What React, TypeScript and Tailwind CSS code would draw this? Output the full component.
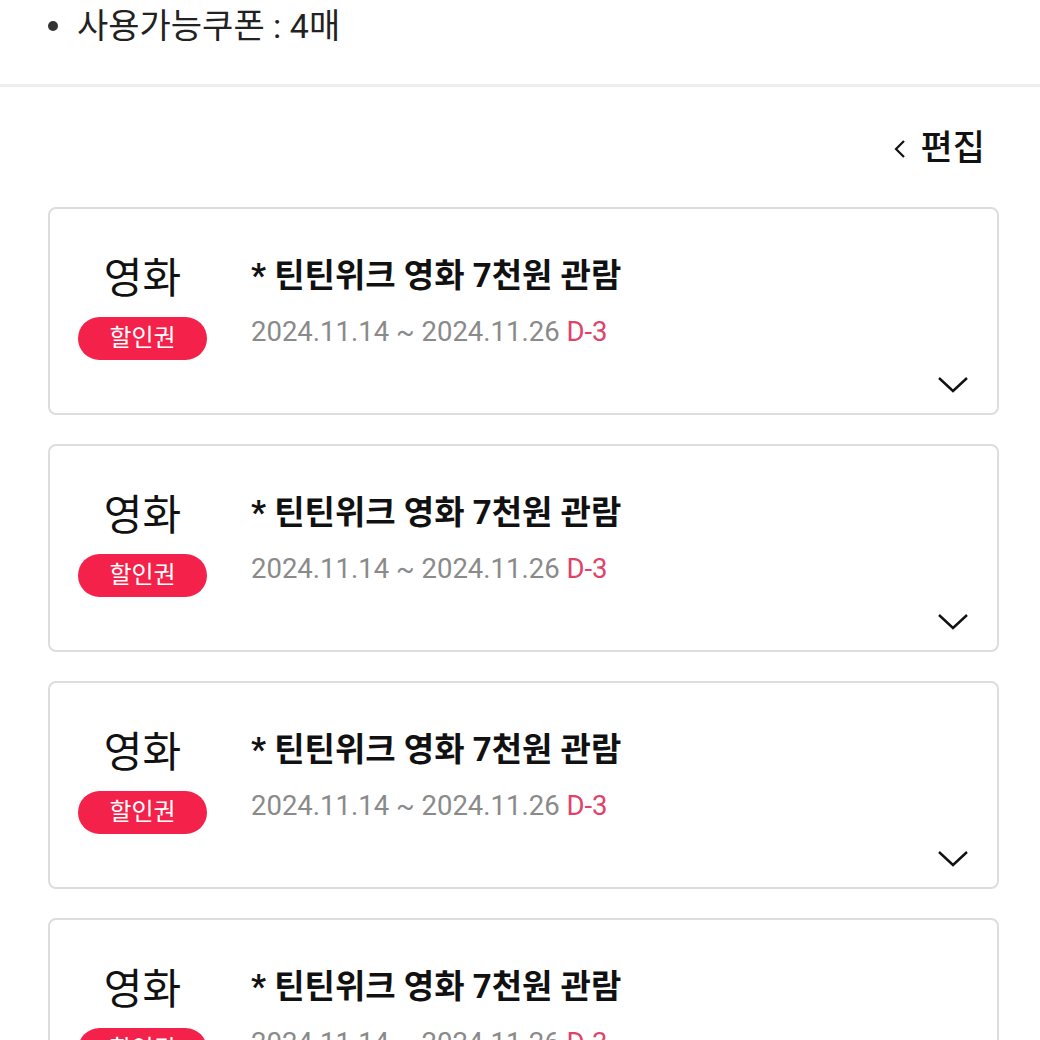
const coupons = [1, 2, 3, 4].map((id) => ({
  id,
  category: "영화",
  badge: "할인권",
  title: "* 틴틴위크 영화 7천원 관람",
  period: "2024.11.14 ~ 2024.11.26",
  dday: "D-3",
}));

const font = { fontFamily: "Roboto, 'Noto Sans CJK KR', sans-serif" };

const App = () => {
  return (
    <div className="w-[1040px] h-[1040px] overflow-hidden bg-white text-black" style={font}>
      <div className="h-[84px] flex items-start pt-[4px] pl-[48px]">
        <div className="flex items-center h-[44px]">
          <span className="w-[10px] h-[10px] rounded-full bg-[#333] mr-[19px]" />
          <span className="text-[34px] leading-[44px] text-[#222]">사용가능쿠폰 : 4매</span>
        </div>
      </div>
      <div className="h-[3px] bg-[#eeeeee]" />

      <div className="flex justify-end items-center pr-[55px] pt-[4px] h-[120px]">
        <svg width="14" height="24" viewBox="0 0 14 24" className="mr-[14px]">
          <path d="M11 4 L3 12 L11 20" fill="none" stroke="#111" strokeWidth="2.2" />
        </svg>
        <span className="text-[35px] leading-[40px] font-medium text-[#111]">편집</span>
      </div>

      <div className="flex flex-col gap-[29px] pl-[48px] pr-[41px]">
        {coupons.map((c) => (
          <div
            key={c.id}
            className="h-[208px] shrink-0 flex flex-col border-2 border-[#dddddd] rounded-[8px] pt-[46px] pl-[28px] pr-[28px]"
          >
            <div className="flex items-start">
              <div className="w-[129px] flex flex-col items-center -mt-px">
                <span className="text-[42px] leading-[50px] text-[#111]">{c.category}</span>
                <span className="mt-[13px] h-[43px] w-[129px] rounded-full bg-[#f4224a] text-white text-[24px] leading-[43px] text-center">
                  {c.badge}
                </span>
              </div>
              <div className="ml-[44px] flex flex-col">
                <span className="text-[33px] leading-[42px] font-bold text-[#111]">{c.title}</span>
                <span className="mt-[18px] text-[27.5px] leading-[34px] text-[#8a8a8a]">
                  {c.period} <span className="text-[#e0426a]">{c.dday}</span>
                </span>
              </div>
            </div>
            <div className="mt-auto flex justify-end pb-[18px]">
              <svg width="32" height="20" viewBox="0 0 32 20">
                <path d="M2 3 L16 16 L30 3" fill="none" stroke="#111" strokeWidth="2.4" />
              </svg>
            </div>
          </div>
        ))}
      </div>
    </div>
  );
};

export default App;
